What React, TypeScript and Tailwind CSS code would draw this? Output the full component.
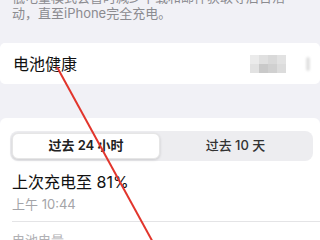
import React from "react";

const font = { fontFamily: 'Inter, "Noto Sans CJK SC", sans-serif' };

export default function App() {
  const mosaic = [
    ["#ebebeb", "#e0e0e0", "#d9d9d9", "#e2e2e2"],
    ["#e2e2e2", "#c9c9c9", "#d0d0d0", "#dcdcdc"],
  ];
  return (
    <div
      className="relative w-[320px] h-[240px] overflow-hidden bg-[#f1f1f6]"
      style={font}
    >
      <div className="mt-[-11px] pl-[12px] pr-[20px] text-[13px] leading-[16px] text-[#8b8b90] whitespace-nowrap">
        <div>低电量模式会暂时减少下载和邮件获取等后台活</div>
        <div>动，直至iPhone完全充电。</div>
      </div>

      <div className="mt-[22px] h-[41px] bg-white rounded-[5px] flex items-center justify-between pl-[13px] pr-[10px]">
        <span className="text-[16px] text-[#111] leading-none">电池健康</span>
        <div className="flex items-center gap-[20px]">
          <div className="flex flex-col blur-[0.7px]">
            {mosaic.map((row, i) => (
              <div key={i} className="flex">
                {row.map((c, j) => (
                  <div key={j} className="w-[9px] h-[9px]" style={{ background: c }} />
                ))}
              </div>
            ))}
          </div>
          <div className="w-[4px] h-[14px] bg-[#e2e2e2] blur-[1px] rounded-sm" />
        </div>
      </div>

      <div className="mt-[34px] bg-white rounded-t-[6px] pt-[13px]">
        <div className="ml-[10px] mr-[7px] h-[30px] rounded-[8px] bg-[#ededf0] p-[2px] flex">
          <div className="w-[148px] h-full rounded-[6px] bg-white shadow-[0_1px_3px_rgba(0,0,0,0.15)] border border-[#e6e6e6] flex items-center justify-center text-[13px] font-semibold text-[#222]">
            过去 24 小时
          </div>
          <div className="flex-1 flex items-center justify-center text-[13px] font-medium text-[#333]">
            过去 10 天
          </div>
        </div>
        <div className="pl-[12px] mt-[10px]">
          <div className="text-[16px] leading-[22px] text-[#111]">上次充电至 81%</div>
          <div className="mt-[2px] text-[13px] leading-[18px] text-[#a4a4a8]">上午 10:44</div>
          <div className="mt-[8px] h-px bg-[#e4e4e6]" />
          <div className="mt-[9px] text-[13px] leading-[18px] text-[#b0b0b4]">电池电量</div>
        </div>
      </div>

      <svg className="absolute inset-0 pointer-events-none" width="320" height="240">
        <line x1="57" y1="67" x2="155" y2="246" stroke="#e2352c" strokeWidth="2" />
      </svg>
    </div>
  );
}
